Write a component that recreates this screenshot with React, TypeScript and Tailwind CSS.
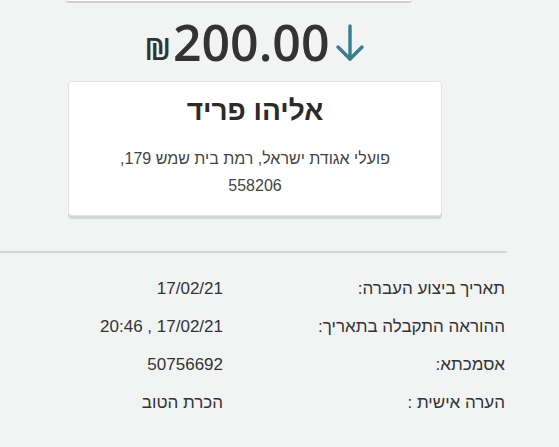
const rows = [
    { label: "תאריך ביצוע העברה:", value: "17/02/21" },
    { label: "ההוראה התקבלה בתאריך:", value: "17/02/21 , 20:46" },
    { label: "אסמכתא:", value: "50756692" },
    { label: "הערה אישית :", value: "הכרת הטוב" },
];

function DownArrow() {
    return (
        <svg width="32" height="40" viewBox="0 0 32 40" fill="none" stroke="#3a7d8c" strokeWidth="3.4" strokeLinecap="round" strokeLinejoin="round">
            <path d="M16 3 V36" />
            <path d="M4 24 L16 36 L28 24" />
        </svg>
    );
}

export default function App() {
    return (
        <div className="w-[559px] h-[447px] overflow-hidden bg-[#f2f3f3] text-[#333] font-['Liberation_Sans',Arial,sans-serif]">
            {/* bottom edge of the previous card */}
            <div className="ml-[66px] w-[346px] h-[3px] border-b-2 border-[#cfd1d1] rounded-b-sm bg-white" />

            <div className="w-[510px]">
                <div dir="ltr" className="flex items-center justify-center mt-[11px] h-[56px]">
                    <span className="font-['Open_Sans',sans-serif] font-semibold text-[31px] mt-[12px] mr-[2px] text-[#333]">₪</span>
                    <span className="font-['Open_Sans',sans-serif] font-semibold text-[50px] leading-none text-[#333]">200.00</span>
                    <span className="ml-[4px] mt-[2px]">
                        <DownArrow />
                    </span>
                </div>

                <div dir="rtl" className="mx-auto mt-[11px] w-[374px] bg-white rounded-[4px] border border-[#e2e4e4] shadow-[0_3px_0_#d5d7d7] px-6 pt-[11px] pb-[16px] text-center">
                    <div className="text-[28px] leading-[36px] text-[#2b2b2b] font-bold">אליהו פריד</div>
                    <div className="mt-[16px] text-[16px] leading-[27px] text-[#444]">
                        פועלי אגודת ישראל, רמת בית שמש 179,
                        <br />
                        558206
                    </div>
                </div>

                <div className="mt-[35px] h-[2px] w-[507px] bg-[#d6d8d8]" />

                <div dir="rtl" className="pt-[26px] pr-[5px] flex flex-col gap-[18px] text-[17px] leading-[20px]">
                    {rows.map((r, i) => (
                        <div key={i} className="flex">
                            <div className="w-[282px] text-right">{r.label}</div>
                            <div className="text-right">{r.value}</div>
                        </div>
                    ))}
                </div>
            </div>
        </div>
    );
}
